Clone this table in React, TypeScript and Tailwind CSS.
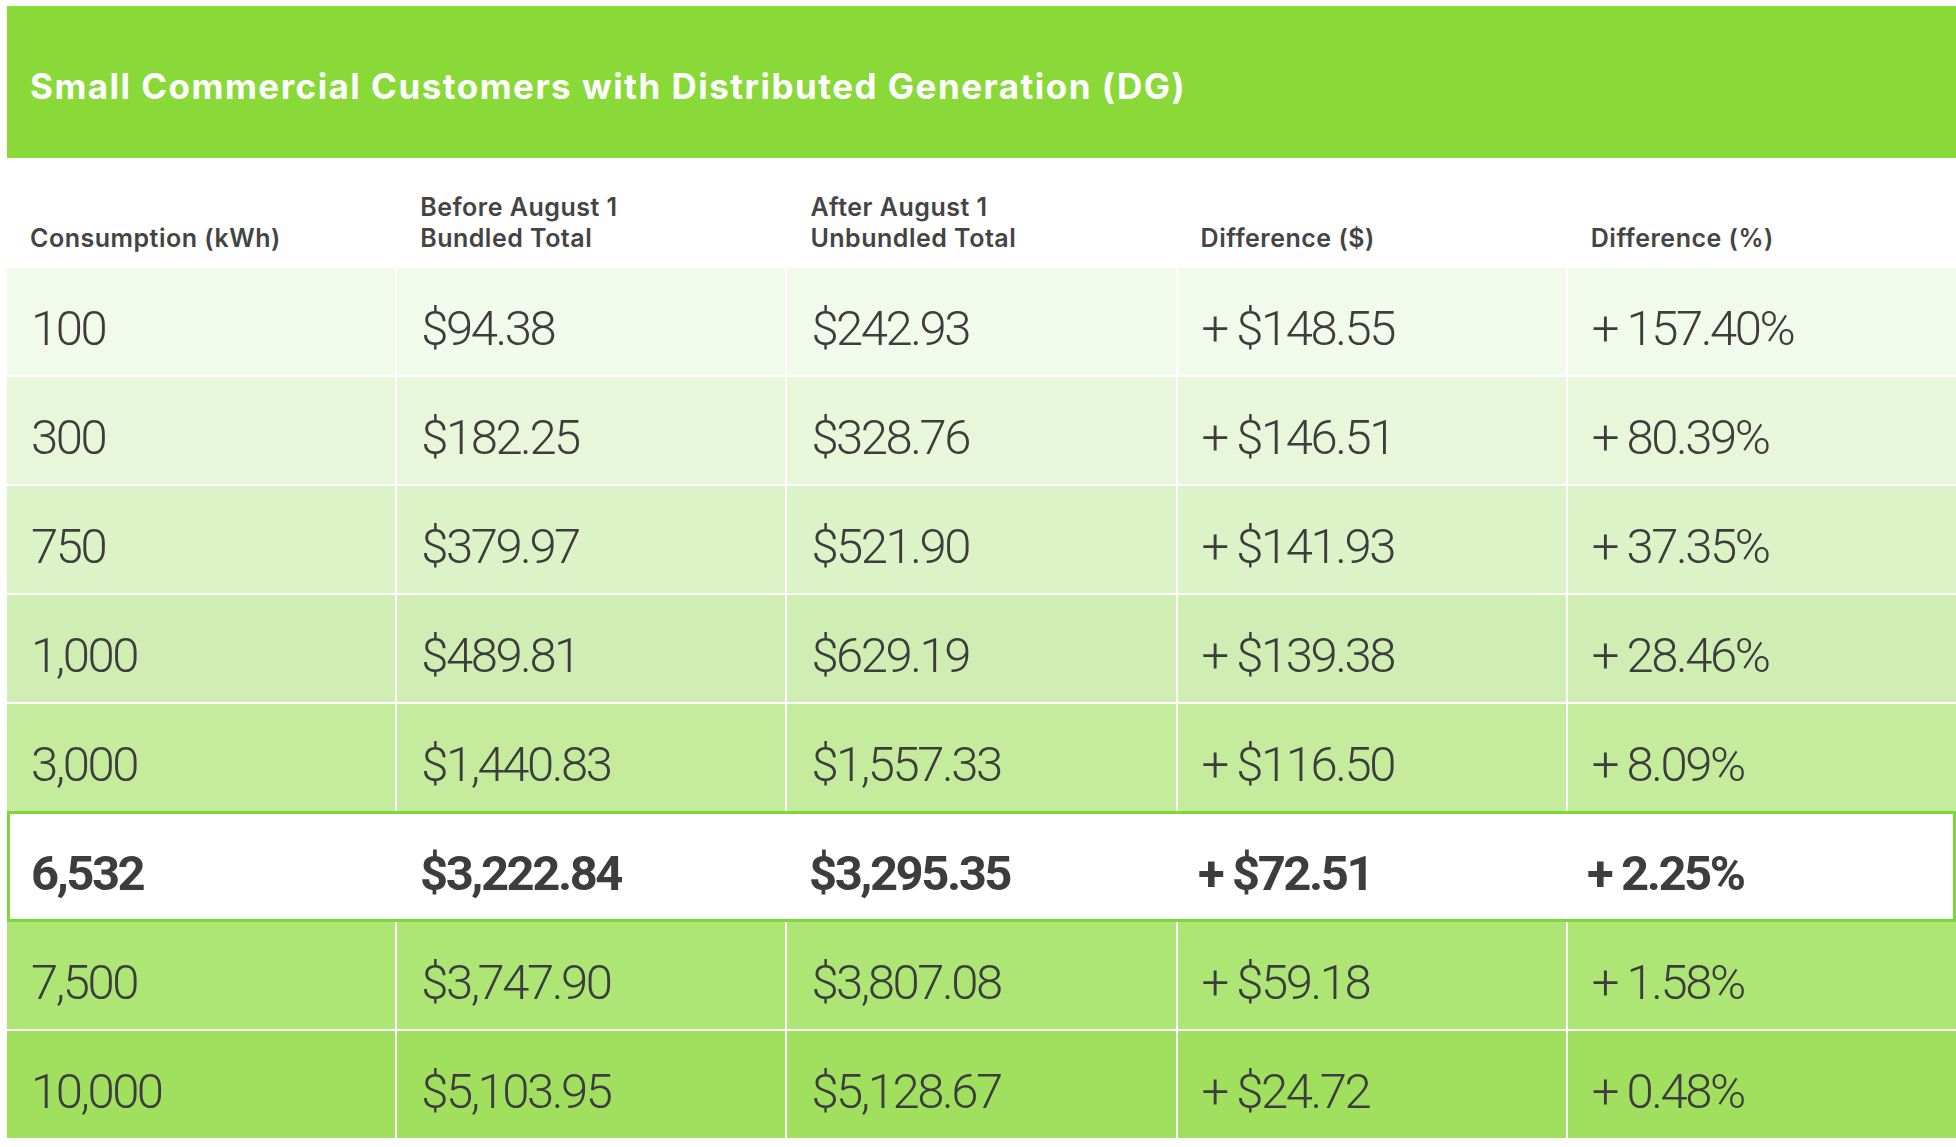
const rows = [
  { kwh: "100", before: "$94.38", after: "$242.93", diff: "+ $148.55", pct: "+ 157.40%", bg: "bg-[#f2faeb]" },
  { kwh: "300", before: "$182.25", after: "$328.76", diff: "+ $146.51", pct: "+ 80.39%", bg: "bg-[#e8f6da]" },
  { kwh: "750", before: "$379.97", after: "$521.90", diff: "+ $141.93", pct: "+ 37.35%", bg: "bg-[#dcf2c7]" },
  { kwh: "1,000", before: "$489.81", after: "$629.19", diff: "+ $139.38", pct: "+ 28.46%", bg: "bg-[#d0eeb3]" },
  { kwh: "3,000", before: "$1,440.83", after: "$1,557.33", diff: "+ $116.50", pct: "+ 8.09%", bg: "bg-[#c5eb9c]" },
  { kwh: "6,532", before: "$3,222.84", after: "$3,295.35", diff: "+ $72.51", pct: "+ 2.25%", bg: "bg-white", highlight: true },
  { kwh: "7,500", before: "$3,747.90", after: "$3,807.08", diff: "+ $59.18", pct: "+ 1.58%", bg: "bg-[#ade675]" },
  { kwh: "10,000", before: "$5,103.95", after: "$5,128.67", diff: "+ $24.72", pct: "+ 0.48%", bg: "bg-[#a1e05f]" },
]

const headers = [
  ["Consumption (kWh)"],
  ["Before August 1", "Bundled Total"],
  ["After August 1", "Unbundled Total"],
  ["Difference ($)"],
  ["Difference (%)"],
]

const headFont = { fontFamily: "Inter, 'Noto Sans', sans-serif" }
const numFont = { fontFamily: "Roboto, 'Liberation Sans', sans-serif" }

export default function App() {
  return (
    <div className="min-h-screen w-full bg-white pt-[6px] pl-[7px]">
      <div className="w-[1949px]">
        {/* title bar */}
        <div className="h-[152px] bg-[#89d939] flex items-center pl-[23px] pt-[8px]">
          <h1 className="text-white font-bold text-[35px] tracking-[0.042em]" style={headFont}>
            Small Commercial Customers with Distributed Generation (DG)
          </h1>
        </div>

        {/* column headings */}
        <div className="h-[110px] grid grid-cols-5 gap-x-[2px] items-end pb-[14px]">
          {headers.map((lines, i) => (
            <div
              key={i}
              className="pl-[23px] text-[#444444] font-semibold text-[25px] leading-[31px] tracking-[0.02em]"
              style={headFont}
            >
              {lines.map((l) => (
                <div key={l}>{l}</div>
              ))}
            </div>
          ))}
        </div>

        {/* body */}
        <div className="flex flex-col gap-y-[2px]">
          {rows.map((r) => {
            const cells = [r.kwh, r.before, r.after, r.diff, r.pct]
            return (
              <div
                key={r.kwh}
                className={
                  r.highlight
                    ? "h-[111px] -my-[2px] grid grid-cols-5 gap-x-[2px] bg-white border-[3px] border-[#7ed63a]"
                    : "h-[107px] grid grid-cols-5 gap-x-[2px] bg-white"
                }
              >
                {cells.map((c, i) => (
                  <div
                    key={i}
                    className={
                      (r.highlight ? "font-bold pl-[21px] " : "font-light pl-[24px] " + r.bg + " ") +
                      "flex items-center pt-[14px] text-[49px] tracking-[-0.05em] text-[#3d3d3d] whitespace-pre"
                    }
                    style={numFont}
                  >
                    {c}
                  </div>
                ))}
              </div>
            )
          })}
        </div>
      </div>
    </div>
  )
}
